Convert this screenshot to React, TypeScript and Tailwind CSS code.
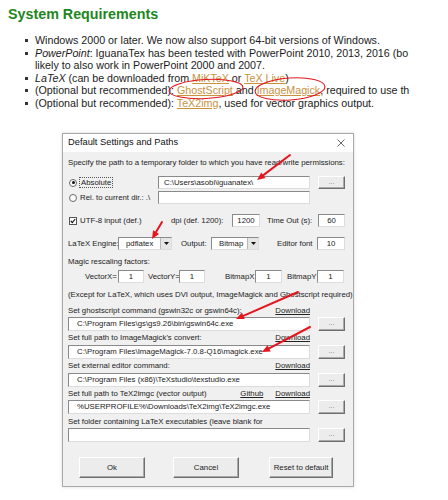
import React from 'react'

const edit =
  'bg-white border border-t-[#8a8a8a] border-l-[#8a8a8a] border-r-[#dcdcdc] border-b-[#dcdcdc]'
const btn =
  'bg-[#ececec] border border-t-white border-l-white border-r-[#6f6f6f] border-b-[#6f6f6f] shadow-[inset_-1px_-1px_0_#a9a9a9] flex items-center justify-center'
const link = 'underline text-[#c8923f]'

function Dots() {
  return <div className={`${btn} w-[27px] h-full text-[7px] text-[#777] leading-none pb-[3px]`}>...</div>
}

function Bullet() {
  return <span className="w-[3px] h-[3px] bg-[#333] mt-[5px] mr-[7px] shrink-0" />
}

function Select({ value, className }: { value: string; className: string }) {
  return (
    <div className={`${edit} ${className} h-full flex items-center`}>
      <span className="flex-1 pl-[7px]">{value}</span>
      <span className="w-[11px] h-full bg-[#e6e6e6] border-l border-[#b8b8b8] flex items-center justify-center">
        <svg width="5" height="3" viewBox="0 0 5 3">
          <path d="M0 0h5L2.5 3z" fill="#111" />
        </svg>
      </span>
    </div>
  )
}

function PathLabel({ text, links }: { text: string; links: string[] }) {
  return (
    <div className="h-[12px] w-[242px] flex items-center justify-between whitespace-nowrap">
      <span>{text}</span>
      <span className="flex gap-[12px]">
        {links.map((l) => (
          <span key={l} className="underline">
            {l}
          </span>
        ))}
      </span>
    </div>
  )
}

function PathRow({ value, className }: { value: string; className: string }) {
  return (
    <div className={`${className} h-[14px] flex gap-[8px]`}>
      <div className={`${edit} w-[242px] h-full flex items-center pl-[8px] whitespace-nowrap`}>{value}</div>
      <Dots />
    </div>
  )
}

function arrow(x1: number, y1: number, x2: number, y2: number) {
  const dx = x2 - x1
  const dy = y2 - y1
  const len = Math.hypot(dx, dy)
  const ux = dx / len
  const uy = dy / len
  const bx = x2 - ux * 8
  const by = y2 - uy * 8
  const pts = `${x2},${y2} ${bx - uy * 3.5},${by + ux * 3.5} ${bx + uy * 3.5},${by - ux * 3.5}`
  return (
    <g key={`${x1}-${y1}`}>
      <line x1={x1} y1={y1} x2={bx} y2={by} stroke="#e3161e" strokeWidth="2" strokeLinecap="round" />
      <polygon points={pts} fill="#e3161e" />
    </g>
  )
}

export default function App() {
  return (
    <div className="relative w-[448px] h-[500px] bg-white overflow-hidden font-['Liberation_Sans',Arial,sans-serif]">
      <h2 className="pl-[8px] pt-[6px] text-[14.3px] leading-[16px] font-bold text-[#1d861d]">System Requirements</h2>

      <ul className="mt-[12px] ml-[25px] w-[388px] overflow-hidden text-[10.7px] leading-[12.5px] text-[#1b1b1b] whitespace-nowrap">
        <li className="flex">
          <Bullet />
          <span>Windows 2000 or later. We now also support 64-bit versions of Windows.</span>
        </li>
        <li className="flex">
          <Bullet />
          <span>
            <i>PowerPoint</i>: IguanaTex has been tested with PowerPoint 2010, 2013, 2016 (bo
            <br />
            likely to also work in PowerPoint 2000 and 2007.
          </span>
        </li>
        <li className="flex">
          <Bullet />
          <span>
            <i>LaTeX</i> (can be downloaded from <span className={link}>MiKTeX</span> or{' '}
            <span className={link}>TeX Live</span>)
          </span>
        </li>
        <li className="flex">
          <Bullet />
          <span>
            (Optional but recommended): <span className={link}>GhostScript</span> and{' '}
            <span className={link}>ImageMagick</span>, required to use th
          </span>
        </li>
        <li className="flex">
          <Bullet />
          <span>
            (Optional but recommended): <span className={link}>TeX2img</span>, used for vector graphics output.
          </span>
        </li>
      </ul>

      <div className="mt-[24px] ml-[62px] w-[292px] h-[354px] border border-[#a9a9a9] shadow-[0_0_3px_rgba(0,0,0,0.15)] bg-[#f0f0f0] text-[7.8px] text-[#222] flex flex-col">
        <div className="h-[18px] bg-white flex items-center justify-between pl-[5px] pr-[8px]">
          <span className="text-[9.3px] text-[#111]">Default Settings and Paths</span>
          <svg width="8" height="8" viewBox="0 0 8 8">
            <path d="M0.5 0.5l7 7M7.5 0.5l-7 7" stroke="#444" strokeWidth="0.8" />
          </svg>
        </div>

        <div className="flex flex-col px-[5px] pt-[4px] leading-[12px]">
          <div className="h-[14px] flex items-center whitespace-nowrap">
            Specify the path to a temporary folder to which you have read/write permissions:
          </div>

          <div className="mt-[6px] h-[13px] flex">
            <div className="w-[90px] flex items-center">
              <span className="ml-[1px] w-[8px] h-[8px] rounded-full border border-[#6a6a6a] bg-white flex items-center justify-center">
                <span className="w-[3px] h-[3px] rounded-full bg-[#111]" />
              </span>
              <span className="ml-[2px] px-[1px] border border-dotted border-[#555] leading-[9px]">Absolute</span>
            </div>
            <div className={`${edit} w-[152px] h-full flex items-center pl-[5px]`}>C:\Users\asobi\iguanatex\</div>
            <div className="ml-[8px]">
              <div className="h-[13px]">
                <Dots />
              </div>
            </div>
          </div>

          <div className="mt-[2px] h-[13px] flex">
            <div className="w-[90px] flex items-center whitespace-nowrap">
              <span className="ml-[1px] w-[8px] h-[8px] rounded-full border border-[#6a6a6a] bg-white" />
              <span className="ml-[3px]">Rel. to current dir.: .\</span>
            </div>
            <div className={`${edit} w-[152px] h-full`} />
          </div>

          <div className="mt-[10px] h-[13px] flex items-center whitespace-nowrap">
            <div className="w-[103px] flex items-center">
              <span className="ml-[1px] w-[8px] h-[8px] border border-[#555] bg-white flex items-center justify-center">
                <svg width="6" height="6" viewBox="0 0 6 6">
                  <path d="M0.8 3l1.5 1.6L5.2 1" fill="none" stroke="#111" strokeWidth="1.1" />
                </svg>
              </span>
              <span className="ml-[3px]">UTF-8 input (def.)</span>
            </div>
            <span className="w-[61px]">dpi (def. 1200):</span>
            <div className={`${edit} w-[28px] h-full flex items-center justify-center`}>1200</div>
            <span className="w-[7px]" />
            <span className="w-[51px]">Time Out (s):</span>
            <div className={`${edit} w-[27px] h-full flex items-center justify-center`}>60</div>
          </div>

          <div className="mt-[10px] h-[13px] flex items-center whitespace-nowrap">
            <span className="w-[50px]">LaTeX Engine:</span>
            <Select value="pdflatex" className="w-[54px]" />
            <span className="w-[9px]" />
            <span className="w-[30px]">Output:</span>
            <Select value="Bitmap" className="w-[48px]" />
            <span className="w-[18px]" />
            <span className="w-[40px]">Editor font</span>
            <div className={`${edit} w-[28px] h-full flex items-center justify-center`}>10</div>
          </div>

          <div className="mt-[6px] h-[12px] flex items-center">Magic rescaling factors:</div>

          <div className="mt-[2px] h-[13px] flex items-center whitespace-nowrap">
            <span className="w-[17px]" />
            <span className="w-[33px]">VectorX=</span>
            <div className={`${edit} w-[26px] h-full flex items-center justify-center`}>1</div>
            <span className="w-[4px]" />
            <span className="w-[31px]">VectorY=</span>
            <div className={`${edit} w-[26px] h-full flex items-center justify-center`}>1</div>
            <span className="w-[20px]" />
            <span className="w-[30px]">BitmapX</span>
            <div className={`${edit} w-[27px] h-full flex items-center justify-center`}>1</div>
            <span className="w-[5px]" />
            <span className="w-[30px]">BitmapY</span>
            <div className={`${edit} w-[27px] h-full flex items-center justify-center`}>1</div>
          </div>

          <div className="mt-[6px] h-[12px] flex items-center whitespace-nowrap">
            (Except for LaTeX, which uses DVI output, ImageMagick and Ghostscript required)
          </div>

          <div className="mt-[4px]">
            <PathLabel text="Set ghostscript command (gswin32c or gswin64c):" links={['Download']} />
          </div>
          <PathRow className="" value="C:\Program Files\gs\gs9.26\bin\gswin64c.exe" />

          <div className="mt-[1px]">
            <PathLabel text="Set full path to ImageMagick's convert:" links={['Download']} />
          </div>
          <PathRow className="mt-[1px]" value="C:\Program Files\ImageMagick-7.0.8-Q16\magick.exe" />

          <div className="mt-[1px]">
            <PathLabel text="Set external editor command:" links={['Download']} />
          </div>
          <PathRow className="mt-[1px]" value="C:\Program Files (x86)\TeXstudio\texstudio.exe" />

          <div className="mt-[1px]">
            <PathLabel text="Set full path to TeX2imgc (vector output)" links={['Github', 'Download']} />
          </div>
          <PathRow className="" value="%USERPROFILE%\Downloads\TeX2img\TeX2imgc.exe" />

          <div className="mt-[2px] h-[12px] flex items-center whitespace-nowrap">
            Set folder containing LaTeX executables (leave blank for
          </div>
          <PathRow className="" value="" />

          <div className="mt-[15px] h-[21px] flex ml-[11px]">
            <div className={`${btn} w-[66px]`}>Ok</div>
            <div className={`${btn} w-[66px] ml-[28px]`}>Cancel</div>
            <div className={`${btn} w-[64px] ml-[30px]`}>Reset to default</div>
          </div>
        </div>
      </div>

      <svg className="absolute left-0 top-0 pointer-events-none" width="448" height="500" viewBox="0 0 448 500">
        <ellipse cx="206" cy="89" rx="37" ry="9.5" fill="none" stroke="#e3161e" strokeWidth="1.1" transform="rotate(-3 206 89)" />
        <ellipse cx="290" cy="89" rx="35" ry="11" fill="none" stroke="#e3161e" strokeWidth="1.1" transform="rotate(-4 290 89)" />
        {arrow(290, 155, 257, 180)}
        {arrow(162, 222, 152, 239)}
        {arrow(298, 292, 236, 319)}
        {arrow(310, 327, 262, 352)}
      </svg>
    </div>
  )
}
